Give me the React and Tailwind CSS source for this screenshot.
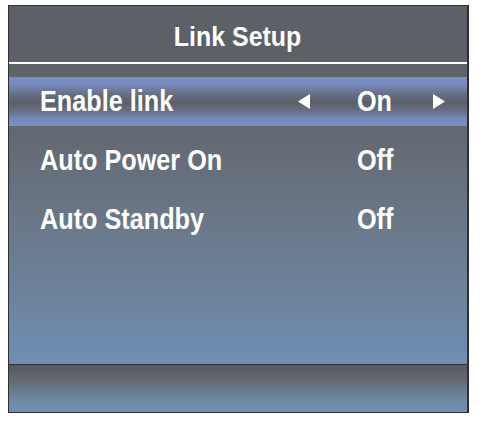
import React from "react";

const rows = [
  { label: "Enable link", value: "On", active: true },
  { label: "Auto Power On", value: "Off" },
  { label: "Auto Standby", value: "Off" },
];

const Arrow = ({ dir }) => (
  <svg width="12" height="15" viewBox="0 0 12 15" className="block">
    {dir === "left" ? (
      <polygon points="12,0 12,15 0,7.5" fill="#ffffff" />
    ) : (
      <polygon points="0,0 0,15 12,7.5" fill="#ffffff" />
    )}
  </svg>
);

const Row = ({ label, value, active }) => (
  <div
    className={
      "flex items-center h-[49px] pl-[31px] text-[29px] leading-[49px] font-bold text-white " +
      (active
        ? "bg-[linear-gradient(to_bottom,#7b8ec6_0%,#7689bc_16%,#676e81_36%,#5b5f67_52%,#676e82_68%,#7689bc_86%,#7b8ec6_100%)]"
        : "")
    }
  >
    <span className="w-[258px] whitespace-nowrap">
      <span className="inline-block origin-left scale-x-[0.87]">{label}</span>
    </span>
    <span className="w-[59px] flex">{active && <Arrow dir="left" />}</span>
    <span className="w-[76px] whitespace-nowrap">
      <span className="inline-block origin-left scale-x-[0.87]">{value}</span>
    </span>
    <span className="w-[12px] flex">{active && <Arrow dir="right" />}</span>
  </div>
);

const App = () => {
  return (
    <div
      className="w-[489px] h-[427px] bg-white pt-[5px] pl-[8px]"
      style={{ fontFamily: '"Liberation Sans", Arial, sans-serif' }}
    >
      <div className="w-[461px] h-[408px] border border-[#2f3136] border-r-2 flex flex-col">
        <div className="h-[56px] bg-[#5d6067] flex justify-center pt-[17px] text-white text-[28px] leading-[28px] font-bold">
          <span className="inline-block scale-x-[0.89]">Link Setup</span>
        </div>
        <div className="h-[2px] bg-white" />
        <div className="h-[300px] bg-[linear-gradient(to_bottom,#5f6369_0%,#62676f_20%,#6a7686_50%,#6d849e_80%,#6f8fb4_100%)] pt-[13px] flex flex-col gap-[10px]">
          {rows.map((r) => (
            <Row key={r.label} {...r} />
          ))}
        </div>
        <div className="h-[1px] bg-[#2f3136]" />
        <div className="flex-1 bg-[linear-gradient(to_bottom,#555960_0%,#656b76_35%,#6d85a2_70%,#7090b6_100%)]" />
      </div>
    </div>
  );
};

export default App;
